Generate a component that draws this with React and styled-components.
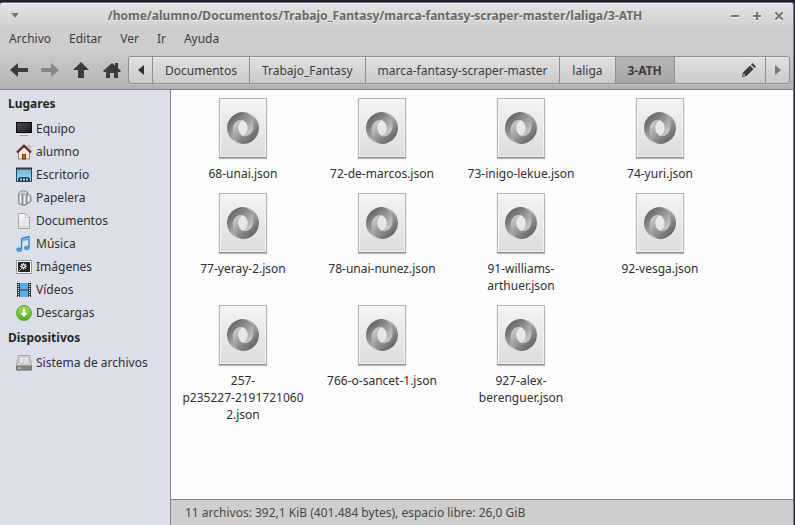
import React from "react";
import styled, { createGlobalStyle } from "styled-components";

const GlobalStyle = createGlobalStyle`
  *, *::before, *::after { box-sizing: border-box; }
  body {
    margin: 0;
    background: #241c55;
    font-family: "Noto Sans", sans-serif;
    font-size: 12px;
    line-height: 17px;
    color: #303030;
  }
  button { font: inherit; color: inherit; }
  svg { display: block; flex: none; }
`;

const Desktop = styled.div`
  min-height: 100vh;
  display: flex;
  flex-direction: column;
  border-top: 2px solid #241f2d;
  border-right: 1px solid #20194e;
  background: #3b2270;
`;

const Window = styled.div`
  flex: 1;
  display: flex;
  flex-direction: column;
  border-right: 1px solid #808080;
  border-radius: 4px 4px 0 0;
  overflow: hidden;
`;

const Header = styled.header`
  height: 88px;
  border-top: 1px solid #777;
  border-bottom: 1px solid #808080;
  background: linear-gradient(#e4e4e4, #cecece 26px, #cecece 46px, #b2b2b2);
  box-shadow: inset 0 1px #f0f0f0;
`;

const TitleBar = styled.div`
  height: 25px;
  padding: 0 7px 0 8px;
  display: flex;
  align-items: center;
`;

const Title = styled.h1`
  flex: 1;
  margin: 0;
  text-align: center;
  font-size: 12px;
  line-height: 17px;
  color: #696969;
  text-shadow: 0 1px #eeeeee;
  white-space: nowrap;
`;

const WindowButton = styled.button`
  width: 14px;
  height: 16px;
  padding: 0;
  border: 0;
  background: none;
  color: #777;
  display: grid;
  place-items: center;
  filter: drop-shadow(0 1px 0 #f2f2f2);
`;

const WindowControls = styled.div`
  display: flex;
  gap: 8px;
`;

const MenuBar = styled.nav`
  height: 20px;
  padding-left: 9px;
  display: flex;
  align-items: center;
  gap: 18px;
`;

const MenuItem = styled.button`
  padding: 0;
  border: 0;
  background: none;
  color: #3c3c3c;
`;

const Toolbar = styled.div`
  display: flex;
  align-items: center;
  padding: 8px 3px 0;
`;

const ToolButtons = styled.div`
  display: flex;
  margin-right: 1px;
`;

const ToolButton = styled.button`
  width: 31px;
  height: 28px;
  padding: 0;
  border: 0;
  background: none;
  color: ${(p) => (p.disabled ? "#858585" : "#3c3c3c")};
  display: grid;
  place-items: center;
`;

const PathBar = styled.div`
  flex: 1;
  height: 28px;
  display: flex;
  border: 1px solid #8e8e8e;
  border-radius: 3px;
  background: linear-gradient(#e0e0e0, #cbcbcb);
  box-shadow: inset 0 1px #ececec, 0 1px #c4c4c4;
  overflow: hidden;
`;

const Crumb = styled.button`
  padding: 0 12px;
  border: 0;
  border-right: 1px solid #8e8e8e;
  color: #3c3c3c;
  font-weight: ${(p) => (p.$current ? 700 : 400)};
  background: ${(p) => (p.$current ? "linear-gradient(#b6b6b6, #a8a8a8)" : "none")};
`;

const ArrowButton = styled.button`
  width: 24px;
  padding: 0;
  border: 0 solid #8e8e8e;
  border-right-width: ${(p) => (p.$end ? 0 : "1px")};
  border-left-width: ${(p) => (p.$end ? "1px" : 0)};
  background: none;
  color: ${(p) => (p.$end ? "#777" : "#333")};
  display: grid;
  place-items: center;
`;

const EditButton = styled.button`
  width: 32px;
  margin-left: auto;
  padding: 0;
  border: 0;
  background: none;
  color: #3c3c3c;
  display: grid;
  place-items: center;
`;

const Content = styled.div`
  flex: 1;
  display: flex;
`;

const Sidebar = styled.aside`
  width: 171px;
  flex: none;
  border-right: 1px solid #808080;
  background: #dbdfe7;
`;

const GroupTitle = styled.h2`
  margin: 0;
  height: 27px;
  padding-left: 8px;
  font-size: 12px;
  line-height: 28px;
  color: #282828;
`;

const PlaceList = styled.ul`
  margin: 0;
  padding: 0;
  list-style: none;
`;

const Place = styled.button`
  width: 100%;
  height: 23px;
  padding: 0 0 0 16px;
  border: 0;
  background: none;
  display: flex;
  align-items: center;
  gap: 4px;
`;

const Main = styled.main`
  flex: 1;
  min-width: 0;
  display: flex;
  flex-direction: column;
  background: #fcfcfc;
`;

const FileGrid = styled.div`
  flex: 1;
  display: grid;
  grid-template-columns: repeat(auto-fill, 128px);
  align-content: start;
  column-gap: 11px;
  row-gap: 11px;
  padding: 8px;
`;

const FileItem = styled.button`
  padding: 0;
  border: 0;
  background: none;
  display: flex;
  flex-direction: column;
  align-items: center;
  gap: 7px;
`;

const Page = styled.span`
  width: 48px;
  height: 60px;
  display: grid;
  place-items: center;
  border: 1px solid #b4b4b4;
  border-bottom-color: #888;
  background: linear-gradient(#f4f4f4, #dcdcdc);
  box-shadow: inset 0 0 0 1px #f5f5f5, 0 1px 1px #bcbcbc;
`;

const FileName = styled.span`
  width: 100%;
  white-space: pre-line;
`;

const StatusBar = styled.footer`
  height: 26px;
  border-top: 1px solid #808080;
  background: #cecece;
  padding-left: 14px;
  line-height: 26px;
  color: #484848;
`;

const placeIcons = {
  computer: (
    <>
      <rect x=".5" y="1.5" width="15" height="10" fill="url(#screen)" stroke="#09080b" />
      <path d="M6 12h4v2H6z" fill="#bfc1c4" />
      <path d="M4 14.5h8" stroke="#999ca1" />
      <path d="M5 13.5h6" stroke="#f3f3f3" />
    </>
  ),
  home: (
    <>
      <path d="M11 2h3v5h-3z" fill="#e8d2c5" stroke="#b18b77" strokeWidth=".6" />
      <path d="M2.5 7.5 8 2.5l5.5 5v7.5h-11z" fill="#f5e7dc" stroke="#b08b78" />
      <path d="M1 8.5 8 1.8l7 6.7" fill="none" stroke="#66232a" strokeWidth="2.2" />
      <path d="M6.5 15V10.5h3V15z" fill="#c97834" stroke="#6a3018" />
    </>
  ),
  desktop: (
    <>
      <rect x=".5" y="1.5" width="15" height="13" fill="url(#sky)" stroke="#2e4655" />
      <path d="M0 1.5h16" stroke="#343434" strokeWidth="2" />
      <path d="M2.5 14v-2.5l1-1h9l1 1V14" fill="#203d4d" stroke="#284b5f" />
      <path d="M4 12.5h2m1 0h2m1 0h2" stroke="#91d5f4" strokeWidth="2" />
    </>
  ),
  trash: (
    <>
      <path d="M2.5 3.5 5 1h4l2.5 1.5V14L8 15.5 3 14z" fill="#aeb3b9" stroke="#7d838a" />
      <path d="M4.5 4.5v9M8.5 5v9" stroke="#f4f5f6" strokeWidth="1.4" />
      <path d="M6.5 4v11" stroke="#858b92" />
      <path d="M3.5 3.5c2-2 4-2 7-.5" fill="none" stroke="#f2f2f2" />
      <path d="M11 4.5h2l2 2v5L13 13h-2z" fill="#c9cdd1" stroke="#787e85" />
      <path d="M12.5 6.5v4.5" stroke="#fff" strokeWidth="1.4" />
    </>
  ),
  document: (
    <>
      <path d="M2.5.5h7l4 4v11h-11z" fill="url(#paper)" stroke="#a6a6a6" />
      <path d="M9.5.5v4h4z" fill="#fff" stroke="#b8b8b8" />
    </>
  ),
  music: (
    <>
      <path d="M5.5 13V2.5l7.5-2v11" fill="none" stroke="#2a83bf" strokeWidth="1.3" />
      <path d="m5.5 4.5 7.5-2" stroke="#5bb2e3" strokeWidth="2" />
      <ellipse cx="3.2" cy="13.6" rx="2.7" ry="1.8" fill="#4ba6dc" stroke="#226f9f" strokeWidth=".6" />
      <ellipse cx="10.8" cy="12" rx="2.5" ry="1.7" fill="#4ba6dc" stroke="#226f9f" strokeWidth=".6" />
    </>
  ),
  image: (
    <>
      <path d="M.5 1.5h15v13H.5z" fill="#fafafa" stroke="#959595" />
      <path d="M2 3h12v10H2z" fill="#242424" />
      <path d="M7.5 4v6.6M4.2 7.3h6.6M5.2 5l4.6 4.6M9.8 5 5.2 9.6" stroke="#eee" strokeWidth="1.2" />
      <circle cx="7.5" cy="7.3" r="1" fill="#333" />
      <path d="m2.5 12.5 3-3" stroke="#aaa" />
    </>
  ),
  video: (
    <>
      <path d="M1 1h14v14H1z" fill="#303338" />
      <path d="M4 1h8v6.5H4zM4 8.5h8V15H4z" fill="#58aef0" />
      <path d="M2.5 2v13M13.5 2v13" stroke="#eeeeee" strokeWidth="1.2" strokeDasharray="1 1" />
    </>
  ),
  download: (
    <>
      <circle cx="8" cy="8" r="7.4" fill="url(#green)" stroke="#4f9a25" />
      <path d="M6.8 4h2.4v4h2.3L8 11.8 4.5 8h2.3z" fill="#fff" />
    </>
  ),
  drive: (
    <>
      <path d="M2.5.5h11l2 10v4.5H.5v-4.5z" fill="#d6d6d6" stroke="#a2a2a2" />
      <path d="M.5 11h15v4H.5z" fill="#858585" stroke="#777" />
      <ellipse cx="8" cy="5.5" rx="4.8" ry="4" fill="#e9e9e9" stroke="#bcbcbc" />
      <ellipse cx="8" cy="5.3" rx="1.4" ry="1" fill="#fafafa" stroke="#aaa" strokeWidth=".6" />
      <path d="m5 9.5 2.5-2.5" stroke="#aaa" />
      <path d="M2 13h3" stroke="#ddd" />
    </>
  ),
};

const Definitions = () => (
  <svg width="0" height="0" aria-hidden="true">
    <defs>
      <linearGradient id="screen" x2="1" y2="1"><stop stopColor="#51505b" /><stop offset="1" stopColor="#17151c" /></linearGradient>
      <linearGradient id="sky" x2="0" y2="1"><stop stopColor="#72b7dc" /><stop offset="1" stopColor="#94daf7" /></linearGradient>
      <linearGradient id="paper" x2="0" y2="1"><stop stopColor="#fafafa" /><stop offset="1" stopColor="#dedede" /></linearGradient>
      <linearGradient id="green" x2="0" y2="1"><stop stopColor="#a2df58" /><stop offset="1" stopColor="#59af24" /></linearGradient>
      <linearGradient id="ringOuter" gradientUnits="userSpaceOnUse" x1="28" y1="32" x2="120" y2="130">
        <stop stopColor="#6c6c6c" /><stop offset="1" stopColor="#d8d8d8" />
      </linearGradient>
      <linearGradient id="ringInner" gradientUnits="userSpaceOnUse" x1="132" y1="128" x2="40" y2="30">
        <stop stopColor="#6c6c6c" /><stop offset="1" stopColor="#d8d8d8" />
      </linearGradient>
    </defs>
  </svg>
);

const JsonRing = () => (
  <svg width="32" height="32" viewBox="0 0 160 160" aria-hidden="true">
    <path
      fillRule="evenodd"
      fill="url(#ringOuter)"
      d="M79.9 119.1c35.4 48.3 70-13.5 70-50.6C149.8 24.6 105.3.1 79.8.1 38.9.1 0 33.9 0 80.1 0 131.5 44.6 160 79.8 160c-7.9-1.1-34.5-6.8-34.8-68-.2-41.3 13.5-57.8 34.8-50.6.5.2 23.5 9.3 23.5 39 0 29.5-23.4 38.7-23.4 38.7z"
    />
    <path
      fillRule="evenodd"
      fill="url(#ringInner)"
      d="M79.8 41.4c-23.4-8.1-52 11.2-52 49.8 0 63.1 46.7 68.8 52.4 68.8 40.9 0 79.8-33.8 79.8-80C160 28.6 115.4.1 80.2.1c9.7-1.3 52.5 10.6 52.5 69 0 38.2-32 59-52.7 50.1-.5-.2-23.5-9.3-23.5-39 0-29.5 23.3-38.8 23.3-38.8z"
    />
  </svg>
);

const menus = ["Archivo", "Editar", "Ver", "Ir", "Ayuda"];
const tools = [
  { label: "Atrás", path: "M0 8 8 1v5h10v4H8v5z" },
  { label: "Adelante", path: "M18 8 10 1v5H0v4h10v5z", disabled: true },
  { label: "Subir", path: "M9 0 17 8h-5v8H6V8H1z" },
  { label: "Inicio", path: "m0 9 9-8 3 2.5V1h3v5l3 3-1 1h-2v6h-4v-5H7v5H3v-6H1z" },
];
const crumbs = ["Documentos", "Trabajo_Fantasy", "marca-fantasy-scraper-master", "laliga", "3-ATH"];
const places = [
  ["Equipo", "computer"], ["alumno", "home"], ["Escritorio", "desktop"],
  ["Papelera", "trash"], ["Documentos", "document"], ["Música", "music"],
  ["Imágenes", "image"], ["Vídeos", "video"], ["Descargas", "download"],
];
const devices = [["Sistema de archivos", "drive"]];
const files = [
  "68-unai.json", "72-de-marcos.json", "73-inigo-lekue.json", "74-yuri.json",
  "77-yeray-2.json", "78-unai-nunez.json", "91-williams-\narthuer.json", "92-vesga.json",
  "257-\np235227-2191721060\n2.json", "766-o-sancet-1.json", "927-alex-\nberenguer.json",
];

const Places = ({ items }) => (
  <PlaceList>
    {items.map(([name, icon]) => (
      <li key={name}>
        <Place type="button">
          <svg width="16" height="16" viewBox="0 0 16 16" aria-hidden="true">{placeIcons[icon]}</svg>
          {name}
        </Place>
      </li>
    ))}
  </PlaceList>
);

export default function App() {
  return (
    <Desktop>
      <GlobalStyle />
      <Window>
        <Header>
          <TitleBar>
            <WindowButton aria-label="Menú de ventana">
              <svg width="8" height="5"><path d="M0 0h8L4 5z" fill="currentColor" /></svg>
            </WindowButton>
            <Title>/home/alumno/Documentos/Trabajo_Fantasy/marca-fantasy-scraper-master/laliga/3-ATH</Title>
            <WindowControls>
              <WindowButton aria-label="Minimizar">
                <svg width="8" height="8"><path d="M0 4h8" stroke="currentColor" strokeWidth="2" /></svg>
              </WindowButton>
              <WindowButton aria-label="Maximizar">
                <svg width="8" height="8"><path d="M0 4h8M4 0v8" stroke="currentColor" strokeWidth="2" /></svg>
              </WindowButton>
              <WindowButton aria-label="Cerrar">
                <svg width="8" height="8"><path d="m0 0 8 8M8 0 0 8" stroke="currentColor" strokeWidth="2" /></svg>
              </WindowButton>
            </WindowControls>
          </TitleBar>
          <MenuBar>
            {menus.map((name) => <MenuItem key={name} type="button">{name}</MenuItem>)}
          </MenuBar>
          <Toolbar>
            <ToolButtons>
              {tools.map(({ label, path, disabled }) => (
                <ToolButton key={label} aria-label={label} disabled={disabled}>
                  <svg width="18" height="16"><path d={path} fill="currentColor" /></svg>
                </ToolButton>
              ))}
            </ToolButtons>
            <PathBar>
              <ArrowButton aria-label="Ruta anterior">
                <svg width="6" height="10"><path d="M6 0v10L0 5z" fill="currentColor" /></svg>
              </ArrowButton>
              {crumbs.map((name) => (
                <Crumb key={name} type="button" $current={name === "3-ATH"}>{name}</Crumb>
              ))}
              <EditButton aria-label="Editar ruta">
                <svg width="14" height="14">
                  <path d="m0 14 1-4.5L8 2.5 11.5 6l-7 7zM9 1.5 10.5 0 14 3.5 12.5 5z" fill="currentColor" />
                  <path d="m1.2 12.8.6-2.2 1.6 1.6z" fill="#ddd" />
                </svg>
              </EditButton>
              <ArrowButton $end aria-label="Ruta siguiente">
                <svg width="6" height="10"><path d="M0 0v10l6-5z" fill="currentColor" /></svg>
              </ArrowButton>
            </PathBar>
          </Toolbar>
        </Header>
        <Content>
          <Sidebar>
            <GroupTitle>Lugares</GroupTitle>
            <Places items={places} />
            <GroupTitle>Dispositivos</GroupTitle>
            <Places items={devices} />
          </Sidebar>
          <Main>
            <FileGrid>
              {files.map((name) => (
                <FileItem key={name} type="button">
                  <Page><JsonRing /></Page>
                  <FileName>{name}</FileName>
                </FileItem>
              ))}
            </FileGrid>
            <StatusBar>11 archivos: 392,1 KiB (401.484 bytes), espacio libre: 26,0 GiB</StatusBar>
          </Main>
        </Content>
      </Window>
      <Definitions />
    </Desktop>
  );
}
